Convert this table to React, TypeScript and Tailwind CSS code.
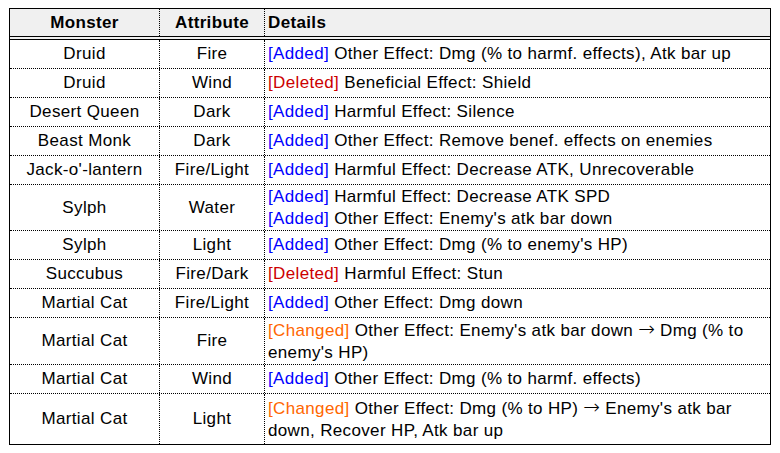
type Tag = 'added' | 'deleted' | 'changed'

type Line = { tag: Tag; text: string }

type Row = { monster: string; attr: string; lines: Line[]; h: string; last?: boolean }

const ARROW = '\u2192'

const rows: Row[] = [
  { monster: 'Druid', attr: 'Fire', h: 'h-[29px]', lines: [{ tag: 'added', text: 'Other Effect: Dmg (% to harmf. effects), Atk bar up' }] },
  { monster: 'Druid', attr: 'Wind', h: 'h-[29px]', lines: [{ tag: 'deleted', text: 'Beneficial Effect: Shield' }] },
  { monster: 'Desert Queen', attr: 'Dark', h: 'h-[29px]', lines: [{ tag: 'added', text: 'Harmful Effect: Silence' }] },
  { monster: 'Beast Monk', attr: 'Dark', h: 'h-[29px]', lines: [{ tag: 'added', text: 'Other Effect: Remove benef. effects on enemies' }] },
  { monster: "Jack-o'-lantern", attr: 'Fire/Light', h: 'h-[29px]', lines: [{ tag: 'added', text: 'Harmful Effect: Decrease ATK, Unrecoverable' }] },
  {
    monster: 'Sylph',
    attr: 'Water',
    h: 'h-[46px]',
    lines: [
      { tag: 'added', text: 'Harmful Effect: Decrease ATK SPD' },
      { tag: 'added', text: "Other Effect: Enemy's atk bar down" },
    ],
  },
  { monster: 'Sylph', attr: 'Light', h: 'h-[29px]', lines: [{ tag: 'added', text: "Other Effect: Dmg (% to enemy's HP)" }] },
  { monster: 'Succubus', attr: 'Fire/Dark', h: 'h-[29px]', lines: [{ tag: 'deleted', text: 'Harmful Effect: Stun' }] },
  { monster: 'Martial Cat', attr: 'Fire/Light', h: 'h-[29px]', lines: [{ tag: 'added', text: 'Other Effect: Dmg down' }] },
  { monster: 'Martial Cat', attr: 'Fire', h: 'h-[47px]', lines: [{ tag: 'changed', text: "Other Effect: Enemy's atk bar down → Dmg (% to enemy's HP)" }] },
  { monster: 'Martial Cat', attr: 'Wind', h: 'h-[29px]', lines: [{ tag: 'added', text: 'Other Effect: Dmg (% to harmf. effects)' }] },
  {
    monster: 'Martial Cat',
    attr: 'Light',
    h: 'h-[50px]',
    last: true,
    lines: [{ tag: 'changed', text: "Other Effect: Dmg (% to HP) → Enemy's atk bar down, Recover HP, Atk bar up" }],
  },
]

const tagStyle: Record<Tag, { label: string; cls: string }> = {
  added: { label: '[Added]', cls: 'text-[#0000ff]' },
  deleted: { label: '[Deleted]', cls: 'text-[#cc0000]' },
  changed: { label: '[Changed]', cls: 'text-[#ff6600]' },
}

// the arrow in Liberation Sans is tiny, so borrow DejaVu's
function Text({ text }: { text: string }) {
  const parts = text.split(ARROW)
  return (
    <>
      {parts.map((p, k) => (
        <span key={k}>
          {k > 0 && (
            <span className="inline-block leading-none font-['DejaVu_Sans','Noto_Sans',sans-serif] text-[20px] font-extralight tracking-normal">
              {ARROW}
            </span>
          )}
          {p}
        </span>
      ))}
    </>
  )
}

export default function App() {
  return (
    <div className="min-h-screen bg-white pt-[8px] pl-[9px] text-[17px] tracking-[0.35px] leading-[22px] text-black font-['Liberation_Sans',Arial,sans-serif]">
      <div className="w-[762px] border border-black">
        {/* Header */}
        <div className="grid grid-cols-[150px_105px_1fr] h-[31px] bg-[#f0f0f0] border-b-4 border-double border-black font-bold">
          <div className="flex items-center justify-center border-r border-dotted border-black">Monster</div>
          <div className="flex items-center justify-center border-r border-dotted border-black">Attribute</div>
          <div className="flex items-center pl-[3px]">Details</div>
        </div>

        {/* Rows */}
        {rows.map((row, i) => (
          <div
            key={i}
            className={`grid grid-cols-[150px_105px_1fr] ${row.h} ${row.last ? '' : 'border-b border-dotted border-black'}`}
          >
            <div className="flex items-center justify-center border-r border-dotted border-black">{row.monster}</div>
            <div className="flex items-center justify-center border-r border-dotted border-black">{row.attr}</div>
            <div className="flex flex-col justify-center pl-[3px] pr-[4px]">
              {row.lines.map((line, j) => (
                <div key={j}>
                  <span className={tagStyle[line.tag].cls}>{tagStyle[line.tag].label}</span> <Text text={line.text} />
                </div>
              ))}
            </div>
          </div>
        ))}
      </div>
    </div>
  )
}
